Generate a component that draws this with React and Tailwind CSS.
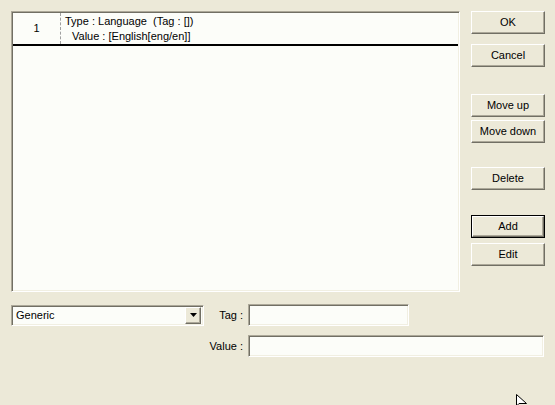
import React from 'react';

const Button = ({ children, isDefault = false, className = '' }) => (
  <div className={`${isDefault ? 'border border-black' : ''} ${className}`}>
    <button
      className={`w-full ${isDefault ? 'h-[21px]' : 'h-[23px]'} bg-[#ECE9D8] text-[11px] text-black border border-t-white border-l-white border-r-[#716F64] border-b-[#716F64] shadow-[inset_-1px_-1px_0_#ACA899] flex items-center justify-center`}
    >
      {children}
    </button>
  </div>
);

const Sunken = ({ className = '', children }) => (
  <div
    className={`bg-[#FCFDF9] border border-t-[#ACA899] border-l-[#ACA899] border-r-white border-b-white shadow-[inset_1px_1px_0_#716F64,inset_-1px_-1px_0_#F1EFE2] ${className}`}
  >
    {children}
  </div>
);

export default function App() {
  return (
    <div className="relative w-[555px] h-[405px] bg-[#ECE9D8] overflow-hidden font-['Liberation_Sans',Arial,sans-serif] text-[11px] text-black">
      <div className="flex pt-[11px] pl-[11px]">
        {/* tag list */}
        <Sunken className="w-[449px] h-[281px] p-[1px]">
          <div className="flex h-[33px] border-b-2 border-black">
            <div className="w-[48px] border-r border-dashed border-[#A0A0A0] flex items-center justify-center">
              1
            </div>
            <div className="pl-[4px] pt-[1px] leading-[15px]">
              <div className="whitespace-pre">Type : Language  (Tag : [])</div>
              <div className="pl-[7px]">Value : [English[eng/en]]</div>
            </div>
          </div>
        </Sunken>

        {/* buttons */}
        <div className="ml-[11px] w-[74px] flex flex-col">
          <Button>OK</Button>
          <Button className="mt-[10px]">Cancel</Button>
          <Button className="mt-[27px]">Move up</Button>
          <Button className="mt-[3px]">Move down</Button>
          <Button className="mt-[24px]">Delete</Button>
          <Button isDefault className="mt-[25px]">Add</Button>
          <Button className="mt-[5px]">Edit</Button>
        </div>
      </div>

      {/* bottom fields */}
      <div className="pl-[11px] mt-[12px]">
        <div className="flex items-center">
          <Sunken className="w-[193px] h-[21px] flex items-center justify-between pl-[4px] pr-[2px]">
            <span>Generic</span>
            <div className="w-[16px] h-[17px] bg-[#ECE9D8] border border-t-white border-l-white border-r-[#716F64] border-b-[#716F64] shadow-[inset_-1px_-1px_0_#ACA899] flex items-center justify-center">
              <svg width="7" height="4" viewBox="0 0 7 4">
                <path d="M0 0h7L3.5 4z" fill="#000" />
              </svg>
            </div>
          </Sunken>
          <div className="w-[44px] text-right pr-[5px]">Tag :</div>
          <Sunken className="w-[161px] h-[22px]" />
        </div>
        <div className="flex items-center mt-[9px]">
          <div className="w-[193px]" />
          <div className="w-[44px] text-right pr-[5px]">Value :</div>
          <Sunken className="w-[296px] h-[22px]" />
        </div>
      </div>

      {/* mouse pointer */}
      <svg className="absolute left-[516px] top-[394px]" width="12" height="12" viewBox="0 0 12 12">
        <path d="M0.5 0.5 L0.5 12 L3 9.5 L10.5 9.5 Z" fill="#fff" stroke="#000" strokeWidth="1" />
      </svg>
    </div>
  );
}
